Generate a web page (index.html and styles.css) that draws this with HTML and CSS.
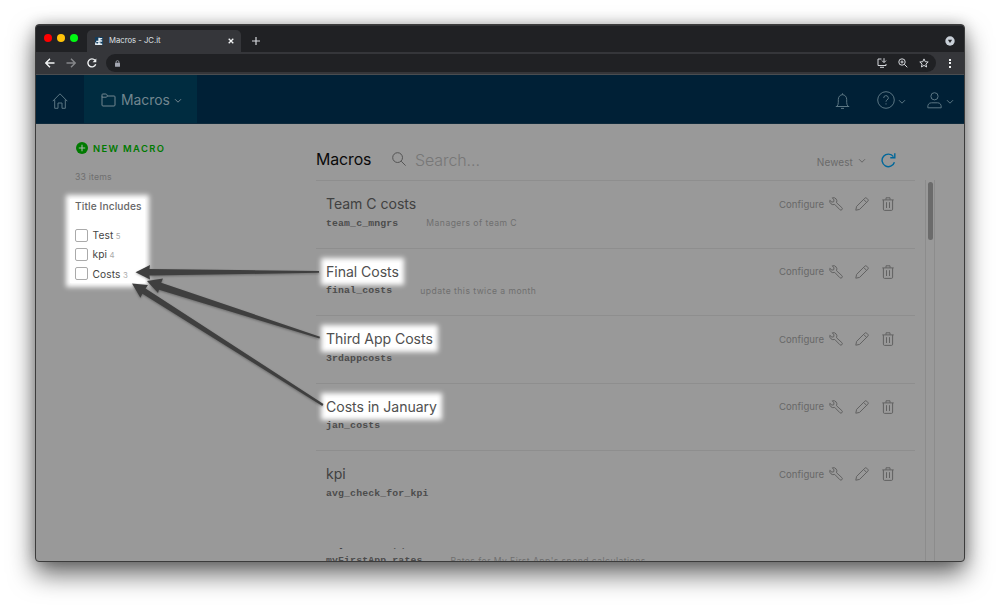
FILE: index.html
```html
<!DOCTYPE html>
<html lang="en">
<head>
<meta charset="utf-8">
<title>Macros - JC.it</title>
<link rel="stylesheet" href="styles.css">
</head>
<body>
<svg class="defs" width="0" height="0">
  <symbol id="chev" viewBox="0 0 8 6"><path d="M1 1.200l3 3 3-3"/></symbol>
  <symbol id="wrench" viewBox="0 0 14 14"><path d="M3.300.8a3.500 3.500 0 0 1 4.200 4.900l5.400 5a1.350 1.350 0 0 1-2 2L5.700 7.400A3.600 3.600 0 0 1 .8 3.300l2.100 1.800 1.800-.3.300-1.900z"/></symbol>
  <symbol id="pencil" viewBox="0 0 14 14"><path d="M.8 13.200l.8-3.800 8.200-8.200a1.300 1.300 0 0 1 1.900 0l1.100 1.100a1.300 1.300 0 0 1 0 1.900l-8.200 8.200zM8.600 2.400l3 3"/></symbol>
  <symbol id="trash" viewBox="0 0 12 14"><path d="M.3 2.900h11.400M4 2.800V.8h4v2M1.400 3v9.200q0 1.200 1.200 1.200h6.800q1.200 0 1.200-1.200V3M4.500 5.200v5.800M7.500 5.200v5.800"/></symbol>
</svg>
<div class="window">
  <div class="tabbar">
    <div class="lights"><i class="red"></i><i class="yellow"></i><i class="green"></i></div>
    <div class="tab">
      <svg class="favicon" viewBox="0 0 10 10"><rect width="10" height="10" fill="#123c5c"/><path d="M5 1v4.500H1.500M9 2H6.200v3H9M1 7v2h3.500V6.500M6 6.500V9h3" fill="none" stroke="#e4edf4" stroke-width="1.700"/></svg>
      <span class="tab-title">Macros - JC.it</span>
      <svg class="close" viewBox="0 0 6 6"><path d="M.7.7l4.600 4.600M5.300.7L.7 5.300"/></svg>
    </div>
    <svg class="plus" viewBox="0 0 8 8"><path d="M4 0v8M0 4h8"/></svg>
    <svg class="tabmenu" viewBox="0 0 10 10"><circle cx="5" cy="5" r="4.700" fill="#c9d0d8"/><path d="M2.900 3.800h4.200L5 6.900z" fill="#202124"/></svg>
  </div>
  <div class="toolbar">
    <svg class="tb" viewBox="0 0 10 10" stroke="#f1f3f4"><path d="M9.500 5H1M5 .8L.8 5 5 9.200"/></svg>
    <svg class="tb" viewBox="0 0 10 10" stroke="#85878a"><path d="M.5 5H9M5 .8L9.200 5 5 9.200"/></svg>
    <svg class="tb" viewBox="0 0 10 10" stroke="#f1f3f4"><path d="M8.700 6.300A4 4 0 1 1 8 2.300"/><path d="M9.300.5v3.700H5.600z" fill="#f1f3f4" stroke="none"/></svg>
    <div class="address">
      <svg class="lock" viewBox="0 0 6 8"><rect y="3" width="6" height="5" rx=".6" fill="#a4a8b2"/><path d="M1.300 3.300V2.200a1.700 1.700 0 0 1 3.400 0v1.100" fill="none" stroke="#a4a8b2"/></svg>
      <div class="actions">
        <svg viewBox="0 0 10 10"><path d="M4.500 1H1v6.500h8V6M3 9.300h4M7 .2v4M5 2.600l2 2 2-2"/></svg>
        <svg viewBox="0 0 10 10"><circle cx="4" cy="4" r="3.200"/><path d="M6.300 6.300l3 3M4 2.500v3M2.500 4h3"/></svg>
        <svg viewBox="0 0 10 10"><path d="M5 .9l1.200 2.800 3 .3-2.300 2 .7 3L5 7.400 2.400 9l.7-3L.8 4l3-.3z"/></svg>
      </div>
    </div>
    <div class="dots"><i></i><i></i><i></i></div>
  </div>
  <header class="nav">
    <div class="home"><svg viewBox="0 0 16 16"><path d="M.7 8.200L8 .8l7.300 7.400M2.700 6.500v8.800H6V10h4v5.300h3.300V6.500"/></svg></div>
    <div class="navtab">
      <svg class="folder" viewBox="0 0 15 14"><path d="M1 3.500V12q0 1 1 1h11q1 0 1-1V3.800q0-.8-1-.8H6.500L5.600 1.400Q5.400 1 4.800 1H1.800Q1 1 1 1.800v2.400h4.500L6.500 3"/></svg>
      <span>Macros</span>
      <svg class="chev"><use href="#chev"/></svg>
    </div>
    <div class="navright">
      <svg class="bell" viewBox="0 0 15 16"><path d="M.8 13.500h13.400M2 13.300q1.300-1.500 1.300-4V6.500a4.200 4.800 0 0 1 8.400 0v2.800q0 2.500 1.300 4M7.500 1.700V.3M6 15.400h3"/></svg>
      <svg class="help" viewBox="0 0 18 18"><circle cx="9" cy="9" r="8.300"/><path d="M6.700 7a2.300 2.300 0 1 1 3.300 2q-1 .5-1 1.700M9 12.300v1.200"/></svg>
      <svg class="chev"><use href="#chev"/></svg>
      <svg class="user" viewBox="0 0 15 17"><circle cx="7.500" cy="4.300" r="3.600"/><path d="M.8 15.800q-.3-5 3.700-5h6q4 0 3.700 5z"/></svg>
      <svg class="chev"><use href="#chev"/></svg>
    </div>
  </header>
  <div class="page">
    <aside class="sidebar">
      <div class="new"><svg viewBox="0 0 12 12"><circle cx="6" cy="6" r="6" fill="#007a00"/><path d="M6 2.800v6.400M2.800 6h6.400" stroke="#a5b5a5" stroke-width="1.100"/></svg><span>NEW MACRO</span></div>
      <div class="count">33 items</div>
      <div class="facet">
        <div class="facet-title">Title Includes</div>
        <label class="opt"><i></i><span>Test</span><small>5</small></label>
        <label class="opt"><i></i><span>kpi</span><small>4</small></label>
        <label class="opt"><i></i><span>Costs</span><small>3</small></label>
      </div>
    </aside>
    <main class="main">
      <div class="head">
        <h1>Macros</h1>
        <svg class="search" viewBox="0 0 14 14"><circle cx="5.600" cy="5.600" r="4.900"/><path d="M9.200 9.200l4.400 4.400"/></svg>
        <span class="placeholder">Search...</span>
        <span class="sort">Newest</span>
        <svg class="chev"><use href="#chev"/></svg>
        <svg class="refresh" viewBox="0 0 15 15"><path d="M13.400 9.200A6.300 6.300 0 1 1 12.400 3.600M13.800.3v4.500H9.300"/></svg>
      </div>
      <div class="row"><div><div class="title"><span>Team C costs</span></div><div class="meta"><code>team_c_mngrs</code><span>Managers of team C</span></div></div><div class="tools"><span>Configure</span><svg class="wr"><use href="#wrench"/></svg><svg class="pe"><use href="#pencil"/></svg><svg class="tr"><use href="#trash"/></svg></div></div>
      <div class="row"><div><div class="title"><span class="lit">Final Costs</span></div><div class="meta"><code>final_costs</code><span>update this twice a month</span></div></div><div class="tools"><span>Configure</span><svg class="wr"><use href="#wrench"/></svg><svg class="pe"><use href="#pencil"/></svg><svg class="tr"><use href="#trash"/></svg></div></div>
      <div class="row"><div><div class="title"><span class="lit">Third App Costs</span></div><div class="meta"><code>3rdappcosts</code></div></div><div class="tools"><span>Configure</span><svg class="wr"><use href="#wrench"/></svg><svg class="pe"><use href="#pencil"/></svg><svg class="tr"><use href="#trash"/></svg></div></div>
      <div class="row"><div><div class="title"><span class="lit">Costs in January</span></div><div class="meta"><code>jan_costs</code></div></div><div class="tools"><span>Configure</span><svg class="wr"><use href="#wrench"/></svg><svg class="pe"><use href="#pencil"/></svg><svg class="tr"><use href="#trash"/></svg></div></div>
      <div class="row last"><div><div class="title"><span>kpi</span></div><div class="meta"><code>avg_check_for_kpi</code></div></div><div class="tools"><span>Configure</span><svg class="wr"><use href="#wrench"/></svg><svg class="pe"><use href="#pencil"/></svg><svg class="tr"><use href="#trash"/></svg></div></div>
      <div class="peek"><div class="row"><div><div class="title"><span>My First App</span></div><div class="meta"><code>myFirstApp_rates</code><span>Rates for My First App's spend calculations</span></div></div><div class="tools"><svg class="pe"><use href="#pencil"/></svg><svg class="tr"><use href="#trash"/></svg></div></div></div>
    </main>
    <div class="scroll"><div class="thumb"></div></div>
  </div>
</div>
<svg class="arrows" viewBox="0 0 1000 609">
  <path d="M135.500 272.300L150 265l-.5 4L319 271v1.800L149.500 275.500l.5 4z"/>
  <path d="M147 281l16-2.500-1.800 4.200L320 336.700l-.6 1.900L159 289.800l-1 3.200z"/>
  <path d="M132 283.400l16 1.600-2.400 3.400L323.500 404l-1.200 2L142.400 293.700l-2 4z"/>
</svg>
</body>
</html>
```
FILE: styles.css
```css
* { box-sizing: border-box; }
body { margin: 0; width: 1000px; height: 609px; overflow: hidden; background: #fff; padding: 24px 35px; font-family: Inter, "Liberation Sans", sans-serif; }
svg { display: block; flex: none; fill: none; }
.defs { position: absolute; }
.window { width: 930px; height: 538px; display: flex; flex-direction: column; overflow: hidden; border: 1px solid #3c3c3c; border-radius: 4px; background: #999; box-shadow: 0 12px 26px rgba(0,0,0,.6), 0 0 14px rgba(0,0,0,.2); }

.tabbar { height: 27px; flex: none; display: flex; align-items: center; background: #202124; border-top: 1px solid #333437; padding: 0 9px 0 8px; }
.lights { display: flex; gap: 5px; width: 43px; margin-bottom: 3px; }
.lights i { width: 8px; height: 8px; border-radius: 50%; }
.red { background: #fe0000; }
.yellow { background: #fec309; }
.green { background: #00f912; }
.tab { align-self: flex-end; width: 154px; height: 22px; display: flex; align-items: center; padding: 0 7px 0 8px; background: #35363a; border-radius: 5px 5px 0 0; }
.favicon { width: 8px; height: 8px; margin-bottom: 1px; }
.tab-title { margin: 0 0 1px 6px; font-size: 7.700px; color: #dfe1e5; flex: 1; white-space: nowrap; }
.close { width: 6px; height: 6px; margin-bottom: 1px; stroke: #f1f3f4; stroke-width: 1.300; }
.plus { width: 8px; height: 8px; margin: 3px 0 0 11px; stroke: #d5d8dc; stroke-width: 1.200; }
.tabmenu { width: 10px; height: 10px; margin: 3px 0 0 auto; }

.toolbar { height: 23px; flex: none; display: flex; align-items: center; padding: 0 13px 0 9px; background: #35363a; border-bottom: 1px solid #4b4d50; }
.tb { width: 10px; height: 10px; margin-right: 11px; stroke-width: 1.400; }
.address { flex: 1; height: 18px; margin-left: -2px; border-radius: 9px; background: #202124; display: flex; align-items: center; padding: 0 7px 0 9px; }
.lock { width: 5px; height: 7px; }
.actions { margin-left: auto; display: flex; gap: 11px; stroke: #d5d8dc; }
.actions svg { width: 10px; height: 10px; }
.dots { width: 2px; margin-left: 13px; display: flex; flex-direction: column; gap: 1.500px; }
.dots i { height: 2px; background: #f1f3f4; }

.nav { height: 49px; flex: none; display: flex; background: #002036; border-bottom: 1px solid #0e2a3c; stroke: #5b7683; color: #72868f; }
.home { width: 48px; display: flex; align-items: center; justify-content: center; padding-top: 4px; }
.home svg { width: 16px; height: 16px; }
.navtab { width: 113px; display: flex; align-items: center; padding: 2px 0 0 17px; background: #002c40; stroke: #72868f; font-size: 13.900px; }
.folder { width: 15px; height: 14px; margin: 0 5px 1px 0; }
.chev { width: 8px; height: 6px; }
.navtab .chev { margin: 1px 0 0 4px; }
.navright { margin-left: auto; display: flex; align-items: center; padding: 2px 10px 0 0; }
.bell { width: 15px; height: 16px; margin: 1px 27px 0 0; }
.help { width: 18px; height: 18px; margin-right: 3px; }
.user { width: 15px; height: 17px; margin: 0 4px 0 21px; }
.navright .chev { margin-top: 3px; }

.page { flex: 1; min-height: 0; display: flex; }
.sidebar { width: 280px; flex: none; padding: 17px 0 0 39px; }
.new { display: flex; align-items: center; height: 14px; gap: 5px; padding-left: 1px; color: #007a00; font-size: 9.400px; font-weight: 600; letter-spacing: 1.350px; }
.new svg { width: 12px; height: 12px; }
.count { height: 12px; line-height: 12px; margin-top: 16px; color: #6f6f6f; font-size: 8.700px; letter-spacing: .2px; }
.facet { width: 75px; height: 84px; margin: 16px 0 0 -5px; padding: 0 0 0 5px; background: #fff; box-shadow: 0 0 5px 4px #fff; color: #444; white-space: nowrap; }
.facet-title { height: 15px; line-height: 15px; margin-bottom: 11.500px; font-size: 10.200px; font-weight: 500; color: #666; letter-spacing: .1px; }
.opt { display: flex; align-items: center; height: 19.300px; font-size: 10.200px; letter-spacing: .1px; }
.opt i { width: 13px; height: 13px; border: 1px solid #aaa; border-radius: 2px; margin-right: 4.500px; }
.opt small { margin: 2px 0 0 2.500px; font-size: 7.800px; color: #aaa; }

.main { width: 599px; flex: none; overflow: hidden; }
.head { height: 57px; display: flex; align-items: center; padding: 15px 19px 0 0; border-bottom: 1px solid #8e8e8e; }
.head h1 { margin: 0; width: 76px; font-size: 15.900px; font-weight: 400; color: #0a0a0a; letter-spacing: -.1px; }
.search { width: 14px; height: 14px; stroke: #555; margin-right: 9px; margin-bottom: 2px; }
.placeholder { font-size: 16px; font-weight: 300; color: #777; letter-spacing: -.1px; }
.sort { margin: 4px 0 0 auto; font-size: 10px; color: #6a6a6a; letter-spacing: .1px; }
.head .chev { margin: 2px 15px 0 5px; stroke: #666; }
.refresh { width: 15px; height: 15px; margin-top: 2px; stroke: #00679a; stroke-width: 1.400; }
.row { height: 67.500px; display: flex; justify-content: space-between; padding: 13.400px 21px 0 10px; border-bottom: 1px solid #8e8e8e; }
.last { border-bottom-color: transparent; }
.title { height: 20px; line-height: 20px; font-size: 14.100px; letter-spacing: -.05px; color: #414141; white-space: nowrap; }
.title span { display: inline-block; height: 20px; }
.title .lit { height: 17px; line-height: 17px; margin-top: 1px; background: #fff; box-shadow: 0 0 5px 5px #fff; color: #505050; }
.meta { display: flex; align-items: center; gap: 28px; height: 16px; margin-top: 1px; white-space: nowrap; font-size: 8.600px; color: #6f6f6f; letter-spacing: .45px; }
.meta code { font: 700 9.800px "Liberation Mono", monospace; letter-spacing: .15px; color: #4c4c4c; }
.tools { height: 20px; display: flex; align-items: center; font-size: 9.600px; color: #686868; stroke: #626262; }
.wr { width: 14px; height: 14px; margin: 0 12px 0 5px; }
.pe { width: 14px; height: 14px; margin-right: 13px; }
.tr { width: 12px; height: 14px; }
.peek { height: 15px; margin-top: 29px; overflow: hidden; }
.peek .row { margin-top: -29px; border: 0; }
.peek .title { line-height: 18px; }
.peek .tools { padding-bottom: 1px; }
.scroll { width: 10px; flex: none; margin: 56px 0 0 10px; border: solid #8c8c8c; border-width: 0 1px; padding: 2px 1px 0 2px; }
.thumb { height: 58px; width: 5px; border-radius: 3px; background: #6b6b6b; }
.arrows { position: absolute; left: 0; top: 0; width: 1000px; height: 609px; fill: #3f3f3f; filter: drop-shadow(0 1px 1px rgba(0,0,0,.3)); pointer-events: none; }
```
